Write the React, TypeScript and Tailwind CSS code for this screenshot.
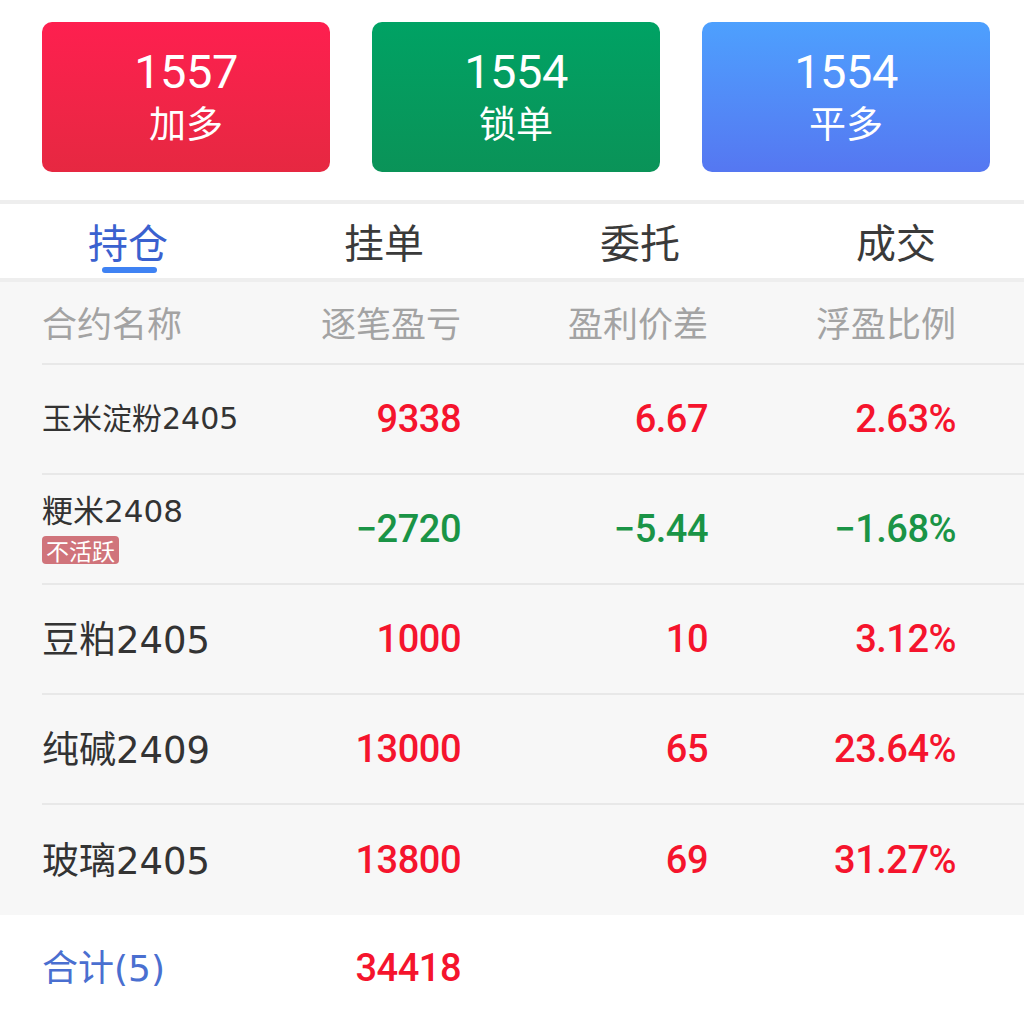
import React from "react";

const CJK = "font-['Noto_Sans_CJK_SC','Noto_Sans',sans-serif]";
const NAME = "font-['DejaVu_Sans','Noto_Sans_CJK_SC',sans-serif]";
const NUM = "font-['Roboto','Noto_Sans_CJK_SC',sans-serif]";

type Row = {
  name: string;
  nameSize: string;
  badge?: boolean;
  pnl: string;
  diff: string;
  ratio: string;
  up: boolean;
};

const rows: Row[] = [
  { name: "玉米淀粉2405", nameSize: "text-[30px]", pnl: "9338", diff: "6.67", ratio: "2.63%", up: true },
  { name: "粳米2408", nameSize: "text-[31px]", badge: true, pnl: "−2720", diff: "−5.44", ratio: "−1.68%", up: false },
  { name: "豆粕2405", nameSize: "text-[37px] mt-[4px]", pnl: "1000", diff: "10", ratio: "3.12%", up: true },
  { name: "纯碱2409", nameSize: "text-[37px] mt-[4px]", pnl: "13000", diff: "65", ratio: "23.64%", up: true },
  { name: "玻璃2405", nameSize: "text-[37px] mt-[4px]", pnl: "13800", diff: "69", ratio: "31.27%", up: true },
];

function ActionButton({ num, label, cls }: { num: string; label: string; cls: string }) {
  return (
    <div className={`flex h-[150px] w-[288px] shrink-0 flex-col items-center justify-center rounded-[10px] text-white ${cls}`}>
      <div className={`${NUM} text-[47px] tracking-[-0.5px] leading-[52px] mt-[-2px]`}>{num}</div>
      <div className={`${CJK} text-[37px] leading-[48px]`}>{label}</div>
    </div>
  );
}

export default function App() {
  return (
    <div className={`w-[1024px] h-[1016px] bg-white ${CJK} overflow-hidden`}>
      <div className="flex gap-[42px] pl-[42px] pt-[22px] h-[200px]">
        <ActionButton num="1557" label="加多" cls="bg-gradient-to-b from-[#fe1f4f] to-[#e62841]" />
        <ActionButton num="1554" label="锁单" cls="bg-gradient-to-b from-[#00a264] to-[#0a9358]" />
        <ActionButton num="1554" label="平多" cls="bg-gradient-to-b from-[#4da0fe] to-[#5577f1]" />
      </div>
      <div className="h-[4px] bg-[#eeeeee]" />
      <div className="grid grid-cols-4 h-[74px]">
        {["持仓", "挂单", "委托", "成交"].map((t, i) => (
          <div key={t} className="relative flex items-center justify-center">
            <span className={`text-[40px] leading-none ${i === 0 ? "text-[#3a61cf]" : "text-[#3a3a3a]"}`}>{t}</span>
            {i === 0 && (
              <div className="absolute left-[102px] top-[63px] h-[6px] w-[55px] rounded-full bg-[#3f82f3]" />
            )}
          </div>
        ))}
      </div>
      <div className="h-[4px] bg-[#eeeeee]" />
      <div className="bg-[#f7f7f7] pl-[42px] h-[633px]">
        <div className="flex h-[83px] items-center border-b-2 border-[#e8e8e8] text-[35px] text-[#a3a3a3]">
          <div className="w-[240px]">合约名称</div>
          <div className="w-[179px] text-right">逐笔盈亏</div>
          <div className="w-[247px] text-right">盈利价差</div>
          <div className="w-[248px] text-right">浮盈比例</div>
        </div>
        {rows.map((r, idx) => {
          const color = r.up ? "text-[#f5142d]" : "text-[#1a9446]";
          return (
            <div
              key={r.name}
              className={`flex h-[110px] items-center ${idx < rows.length - 1 ? "border-b-2 border-[#e8e8e8]" : ""}`}
            >
              <div className="w-[240px] flex flex-col items-start">
                <div className={`${NAME} ${r.nameSize} text-[#333333] leading-tight ${r.badge ? "mt-[-2px]" : ""}`}>{r.name}</div>
                {r.badge && (
                  <div className={`${CJK} mt-[6px] h-[28px] w-[77px] rounded-[4px] bg-[#d0747b] text-white text-[23px] leading-[28px] text-center`}>
                    不活跃
                  </div>
                )}
              </div>
              <div className={`${NUM} w-[179px] text-right text-[38px] font-medium tracking-[-0.5px] ${color}`}>{r.pnl}</div>
              <div className={`${NUM} w-[247px] text-right text-[38px] font-medium tracking-[-0.5px] ${color}`}>{r.diff}</div>
              <div className={`${NUM} w-[248px] text-right text-[38px] font-medium tracking-[-0.5px] ${color}`}>{r.ratio}</div>
            </div>
          );
        })}
      </div>
      <div className="flex h-[101px] items-center pl-[42px]">
        <div className={`${NAME} w-[240px] text-[36px] text-[#4a6fd0] mt-[6px]`}>合计(5)</div>
        <div className={`${NUM} w-[179px] text-right text-[38px] font-medium tracking-[-0.5px] text-[#f5142d] mt-[6px]`}>34418</div>
      </div>
    </div>
  );
}
